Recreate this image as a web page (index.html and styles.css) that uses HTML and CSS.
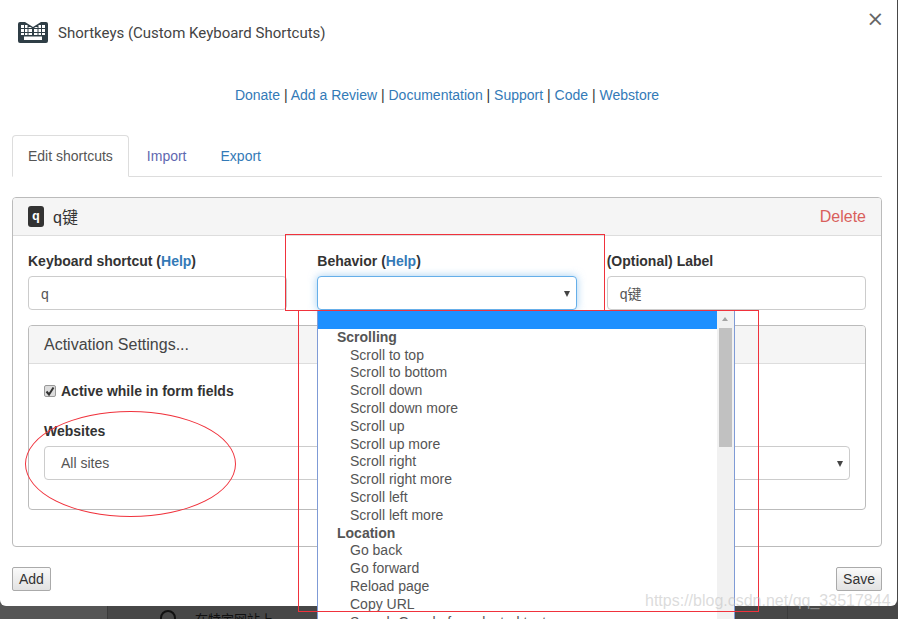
FILE: index.html
```html
<!DOCTYPE html>
<html lang="en">
<head>
<meta charset="utf-8">
<title>Shortkeys</title>
<link rel="stylesheet" href="styles.css">
</head>
<body>
<div class="stage">
  <div class="modal">
    <header class="top">
      <svg class="logo" viewBox="0 0 30 21" width="30" height="21" aria-hidden="true">
        <path fill="#2f3e46" d="M2 0h5l8 5 8-5h5a2 2 0 0 1 2 2v17a2 2 0 0 1-2 2H2a2 2 0 0 1-2-2V2a2 2 0 0 1 2-2z"/>
        <path fill="#fff" d="M3 3h3v3H3zM7 3h2.500v3H7zM3 7h3v3H3zM7 7h2.500v3H7zM10.500 7H14v3h-3.500zM16 7h3.500v3H16zM20.500 7H23v3h-2.500zM24 7h3v3h-3zM20.500 3H23v3h-2.500zM24 3h3v3h-3zM10.500 5h2l1.500 1h-3.500zM17.500 5h2v1H16zM3 11h3v2H3zM7 11h2.500v2H7zM10.500 11H14v2h-3.500zM16 11h3.500v2H16zM20.500 11H23v2h-2.500zM24 11h3v2h-3zM6 14.500h18V18H6z"/>
      </svg>
      <span class="app-name">Shortkeys (Custom Keyboard Shortcuts)</span>
      <span class="close">×</span>
    </header>
    <nav class="links"><a>Donate</a> | <a>Add a Review</a> | <a>Documentation</a> | <a>Support</a> | <a>Code</a> | <a>Webstore</a></nav>
    <ul class="tabs">
      <li class="tab active">Edit shortcuts</li>
      <li class="tab visited">Import</li>
      <li class="tab">Export</li>
    </ul>
    <section class="panel">
      <div class="panel-head">
        <div class="key-name"><kbd class="kbd">q</kbd><span class="key-title">q键</span></div>
        <span class="delete">Delete</span>
      </div>
      <div class="panel-body">
        <div class="fields">
          <div class="field">
            <label class="lbl">Keyboard shortcut (<a>Help</a>)</label>
            <div class="input">q</div>
          </div>
          <div class="field">
            <label class="lbl">Behavior (<a>Help</a>)</label>
            <div class="input select focus"><i class="caret"></i></div>
          </div>
          <div class="field">
            <label class="lbl">(Optional) Label</label>
            <div class="input">q键</div>
          </div>
        </div>
        <section class="inner">
          <div class="inner-head">Activation Settings...</div>
          <div class="inner-body">
            <div class="check-row">
              <span class="check"><svg viewBox="0 0 12 12" width="12" height="12" aria-hidden="true"><path d="M2.500 6.500 5 9.500 9.500 2.500" fill="none" stroke="#333" stroke-width="2"/></svg></span>
              <span class="check-label">Active while in form fields</span>
            </div>
            <label class="lbl sites-label">Websites</label>
            <div class="input select sites">All sites<i class="caret"></i></div>
          </div>
        </section>
      </div>
    </section>
    <div class="actions">
      <button class="btn">Add</button>
      <button class="btn">Save</button>
    </div>
  </div>

  <div class="behind">
    <svg class="search" viewBox="0 0 16 16" width="16" height="16" aria-hidden="true"><circle cx="8" cy="8" r="7" fill="none" stroke="#111" stroke-width="2"/></svg>
    <span class="behind-text">在特定网站上</span>
  </div>
  <span class="behind-rule one"></span>
  <span class="behind-rule two"></span>

  <div class="dropdown">
    <div class="listbox">
      <div class="opt selected"></div>
      <div class="group">Scrolling</div>
      <div class="opt">Scroll to top</div>
      <div class="opt">Scroll to bottom</div>
      <div class="opt">Scroll down</div>
      <div class="opt">Scroll down more</div>
      <div class="opt">Scroll up</div>
      <div class="opt">Scroll up more</div>
      <div class="opt">Scroll right</div>
      <div class="opt">Scroll right more</div>
      <div class="opt">Scroll left</div>
      <div class="opt">Scroll left more</div>
      <div class="group">Location</div>
      <div class="opt">Go back</div>
      <div class="opt">Go forward</div>
      <div class="opt">Reload page</div>
      <div class="opt">Copy URL</div>
      <div class="opt">Search Google for selected text</div>
    </div>
    <div class="scrollbar">
      <i class="arrow-up"></i>
      <div class="thumb"></div>
    </div>
  </div>

  <span class="mark mark-a"></span>
  <span class="mark mark-b"></span>
  <span class="mark mark-c"></span>
  <span class="watermark">https://blog.csdn.net/qq_33517844</span>
</div>
</body>
</html>
```
FILE: styles.css
```css
* { box-sizing: border-box; }
html, body { margin: 0; padding: 0; }
body {
  width: 898px;
  height: 619px;
  overflow: hidden;
  font-family: "Liberation Sans", Arial, sans-serif;
  font-size: 14px;
  color: #333;
}
.stage {
  position: relative;
  width: 898px;
  height: 619px;
  overflow: hidden;
  background: linear-gradient(90deg, #555 107px, #474747 107px);
}
.modal {
  width: 897px;
  height: 606px;
  background: #fff;
  border-radius: 0 0 6px 6px;
  padding: 0 15px 0 12px;
}
a { color: #337ab7; }

.top {
  position: relative;
  display: flex;
  align-items: center;
  height: 65px;
  padding-left: 6px;
}
.logo { flex: none; margin-right: 10px; }
.app-name {
  font-family: Roboto, sans-serif;
  font-size: 15px;
  color: #444;
}
.close {
  position: absolute;
  right: -2px;
  top: 7px;
  font-family: "DejaVu Sans", sans-serif;
  font-size: 21px;
  line-height: 24px;
  color: #666;
}

.links {
  height: 70px;
  padding-top: 22px;
  line-height: 16px;
  text-align: center;
}

.tabs {
  display: flex;
  margin: 0 0 20px;
  padding: 0;
  height: 42px;
  list-style: none;
  border-bottom: 1px solid #ddd;
}
.tab {
  height: 42px;
  padding: 12px 15px 0;
  margin-right: 2px;
  line-height: 16px;
  color: #337ab7;
  border: 1px solid transparent;
  border-radius: 4px 4px 0 0;
}
.tab.visited { color: #5f68b0; }
.tab.active {
  color: #555;
  background: #fff;
  border-color: #ddd #ddd #fff;
}

.panel {
  height: 350px;
  border: 1px solid #bbb;
  border-radius: 4px;
}
.panel-head {
  display: flex;
  align-items: center;
  justify-content: space-between;
  height: 38px;
  padding: 0 15px;
  background: #f5f5f5;
  border-bottom: 1px solid #ddd;
  border-radius: 3px 3px 0 0;
}
.key-name {
  display: flex;
  align-items: center;
  gap: 9px;
  font-family: "Liberation Sans", "Noto Sans CJK SC", sans-serif;
  font-size: 16px;
}
.key-title { padding-bottom: 2px; }
.kbd {
  display: flex;
  align-items: center;
  justify-content: center;
  width: 16px;
  height: 21px;
  background: #333;
  color: #fff;
  border-radius: 3px;
  font-family: "Liberation Mono", monospace;
  font-size: 13px;
  font-weight: bold;
}
.delete { font-size: 16px; color: #d9605c; }
.panel-body { padding: 17px 15px 0; }
.fields { display: flex; gap: 30px; }
.field { flex: 1 1 0; min-width: 0; }
.lbl {
  display: block;
  margin-bottom: 7px;
  height: 16px;
  line-height: 16px;
  font-weight: bold;
  color: #333;
}
.input {
  position: relative;
  height: 34px;
  padding: 0 12px;
  line-height: 34px;
  font-family: "Liberation Sans", "Noto Sans CJK SC", sans-serif;
  color: #555;
  background: #fff;
  border: 1px solid #ccc;
  border-radius: 4px;
}
.focus {
  border-color: #66afe9;
  box-shadow: 0 0 8px rgba(102, 175, 233, .6);
}
.caret {
  position: absolute;
  right: 6px;
  top: 14px;
  border-left: 3.500px solid transparent;
  border-right: 3.500px solid transparent;
  border-top: 6px solid #444;
}
.inner {
  margin-top: 15px;
  height: 185px;
  border: 1px solid #bbb;
  border-radius: 4px;
}
.inner-head {
  height: 38px;
  padding: 0 15px;
  line-height: 37px;
  font-size: 16px;
  color: #444;
  background: #f5f5f5;
  border-bottom: 1px solid #ddd;
  border-radius: 3px 3px 0 0;
}
.inner-body { padding: 19px 15px 0; }
.check-row { display: flex; align-items: center; height: 16px; }
.check {
  display: flex;
  align-items: center;
  justify-content: center;
  width: 12px;
  height: 12px;
  margin-right: 5px;
  background: #ddd;
  border: 1px solid #999;
  border-radius: 2px;
}
.check svg { flex: none; }
.check-label { font-weight: bold; color: #333; }
.sites-label { margin-top: 24px; }
.sites { padding-left: 16px; line-height: 32px; }

.actions {
  display: flex;
  justify-content: space-between;
  margin-top: 20px;
}
.btn {
  height: 24px;
  padding: 0 6px;
  font-family: "Liberation Sans", Arial, sans-serif;
  font-size: 14px;
  color: #333;
  background: linear-gradient(#fafafa, #e2e2e2);
  border: 1px solid #aaa;
  border-radius: 2px;
}

.behind {
  display: flex;
  align-items: center;
  gap: 19px;
  position: absolute;
  left: 160px;
  top: 609px;
  height: 18px;
}
.behind-text {
  font-family: "Noto Sans CJK SC", sans-serif;
  font-size: 13px;
  color: #111;
}
.behind-rule { position: absolute; top: 606px; width: 1px; height: 13px; background: #3b3b3b; }
.behind-rule.one { left: 107px; }
.behind-rule.two { left: 787px; }

.dropdown {
  position: absolute;
  left: 317px;
  top: 310px;
  width: 418px;
  height: 320px;
  display: flex;
  background: #fff;
  border: 1px solid #7f9bd6;
  border-top-color: #fff;
}
.listbox { flex: 1 1 0; min-width: 0; overflow: hidden; color: #555; }
.opt, .group { height: 17.800px; line-height: 17.800px; white-space: nowrap; }
.opt { padding-left: 32px; }
.group { padding-left: 19px; font-weight: bold; }
.selected { background: #1e90ff; }
.scrollbar {
  position: relative;
  flex: none;
  width: 17px;
  background: #f1f1f1;
}
.arrow-up {
  position: absolute;
  left: 5px;
  top: 6px;
  border-left: 3.500px solid transparent;
  border-right: 3.500px solid transparent;
  border-bottom: 4px solid #a3a3a3;
}
.thumb {
  position: absolute;
  left: 2px;
  top: 17px;
  width: 13px;
  height: 119px;
  background: #c1c1c1;
}

.mark { position: absolute; border: 1px solid #f0323c; }
.mark-a { left: 285px; top: 234px; width: 320px; height: 77px; }
.mark-b { left: 298px; top: 310px; width: 461px; height: 302px; }
.mark-c { left: 25px; top: 411px; width: 211px; height: 106px; border-radius: 50%; }
.watermark {
  position: absolute;
  left: 645px;
  top: 592px;
  font-size: 16px;
  line-height: 18px;
  white-space: nowrap;
  color: rgba(190, 190, 190, .55);
}
```
